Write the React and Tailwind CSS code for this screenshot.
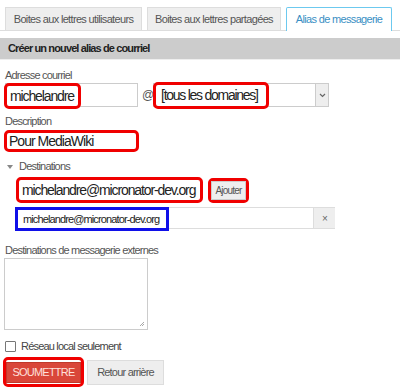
export default function App() {
  const red = "border-[3px] border-[#f00000] rounded-[5px]";
  return (
    <div className="w-[400px] h-[389px] overflow-hidden bg-white font-['Liberation_Sans',Arial,sans-serif] tracking-[-0.05em] text-[#555] flex flex-col">
      {/* tabs */}
      <div className="flex items-end gap-[5px] pl-[5px] h-[31px] border-b border-[#ddd] shrink-0">
        <div className="w-[137px] h-[23px] bg-[#eee] border border-b-0 border-[#ddd] flex items-center justify-center text-[11px] text-[#555] tracking-[-0.06em]">
          Boites aux lettres utilisateurs
        </div>
        <div className="w-[134px] h-[23px] bg-[#eee] border border-b-0 border-[#ddd] flex items-center justify-center text-[11px] text-[#555] tracking-[-0.06em]">
          Boites aux lettres partagées
        </div>
        <div className="w-[106px] h-[24px] -mb-px bg-white border border-b-0 border-[#6cc9ef] rounded-t-[2px] flex items-center justify-center text-[11px] text-[#3a8fc4] tracking-[-0.06em]">
          Alias de messagerie
        </div>
      </div>

      {/* header */}
      <div className="mt-[7px] h-[21px] bg-[#cccccc] flex items-center pl-[8px] text-[11px] font-bold text-[#222] tracking-[-0.08em] shrink-0">
        Créer un nouvel alias de courriel
      </div>
      <div className="h-px bg-[#eee] shrink-0" />

      <div className="flex flex-col pl-[5px]">
        {/* Adresse courriel */}
        <div className="mt-[9px] text-[11px] leading-[13px] text-[#555]">Adresse courriel</div>
        <div className="mt-[1px] flex items-center h-[24px]">
          <div className="relative w-[133px] h-[24px] border border-[#ccc] bg-white">
            <div className={`absolute left-[-2px] top-[-1px] w-[77px] h-[26px] ${red} flex items-center pl-[3px] text-[14px] text-[#222] tracking-[-0.08em]`}>
              michelandre
            </div>
          </div>
          <span className="ml-[4px] w-[10px] text-[12px] text-[#555]">@</span>
          <div className="relative ml-[1px] w-[176px] h-[24px] border border-[#ccc] bg-white">
            <div className={`absolute left-[-1px] top-[-2px] w-[116px] h-[27px] ${red} flex items-center pl-[5px] text-[14px] text-[#222] whitespace-nowrap tracking-[-0.09em]`}>
              [tous les domaines]
            </div>
            <div className="absolute right-0 top-0 w-[13px] h-[22px] bg-[#eee] border-l border-[#ccc] flex items-center justify-center">
              <svg width="7" height="5" viewBox="0 0 7 5">
                <path d="M1 1 L3.5 3.5 L6 1" fill="none" stroke="#666" strokeWidth="1.2" />
              </svg>
            </div>
          </div>
        </div>

        {/* Description */}
        <div className="mt-[8px] text-[11px] leading-[13px] text-[#555]">Description</div>
        <div className={`mt-[2px] -ml-px w-[135px] h-[22px] ${red} flex items-center pl-[2px] text-[14px] text-[#222] tracking-[-0.07em]`}>
          Pour MediaWiki
        </div>

        {/* Destinations */}
        <div className="mt-[8px] flex items-center text-[11px] leading-[13px] text-[#555]">
          <svg width="6" height="4" viewBox="0 0 6 4" className="ml-[2px]">
            <path d="M0 0 L6 0 L3 4 Z" fill="#888" />
          </svg>
          <span className="ml-[6px]">Destinations</span>
        </div>
        <div className="mt-[4px] ml-[11px] flex items-center">
          <div className={`w-[187px] h-[26px] ${red} flex items-center pl-[3px] text-[14px] text-[#222] whitespace-nowrap tracking-[-0.08em]`}>
            michelandre@micronator-dev.org
          </div>
          <div className={`ml-[5px] w-[41px] h-[25px] ${red} flex items-center justify-center`}>
            <div className="w-[35px] h-[19px] bg-[#eee] border border-[#ccc] flex items-center justify-center text-[10px] text-[#555]">
              Ajouter
            </div>
          </div>
        </div>
        <div className="mt-[4px] ml-[10px] w-[320px] h-[22px] border-t border-b border-[#ddd] flex">
          <div className="w-[154px] h-[24px] -mt-px border-[3px] border-[#1010e8] flex items-center pl-[5px] text-[11px] text-[#222] whitespace-nowrap tracking-[-0.08em]">
            michelandre@micronator-dev.org
          </div>
          <div className="flex-1" />
          <div className="w-[22px] h-[20px] bg-[#eee] border-l border-[#ddd] flex items-center justify-center text-[10px] text-[#666]">
            ×
          </div>
        </div>

        {/* externes */}
        <div className="mt-[15px] text-[11px] leading-[13px] text-[#555]">Destinations de messagerie externes</div>
        <div className="relative mt-[1px] -ml-px w-[144px] h-[72px] border border-[#ccc] bg-white">
          <svg width="6" height="6" viewBox="0 0 6 6" className="absolute right-[2px] bottom-[2px]">
            <path d="M5 1 L1 5 M5 3 L3 5" stroke="#aaa" strokeWidth="1" />
          </svg>
        </div>

        {/* checkbox */}
        <div className="mt-[10px] flex items-center h-[13px]">
          <div className="w-[11px] h-[11px] border border-[#777] rounded-[1px] bg-white" />
          <span className="ml-[5px] text-[11px] text-[#444]">Réseau local seulement</span>
        </div>

        {/* buttons */}
        <div className="mt-[4px] -ml-[2px] flex items-center">
          <div className={`w-[81px] h-[30px] ${red} flex items-center justify-center`}>
            <div className="w-[76px] h-[21px] bg-[#d9473a] border border-[#c0392b] flex items-center justify-center text-[11px] text-[#ffe0dc]">
              SOUMETTRE
            </div>
          </div>
          <div className="ml-[3px] w-[77px] h-[25px] bg-[#eee] border border-[#ddd] flex items-center justify-center text-[11px] text-[#555]">
            Retour arrière
          </div>
        </div>
      </div>
    </div>
  );
}
